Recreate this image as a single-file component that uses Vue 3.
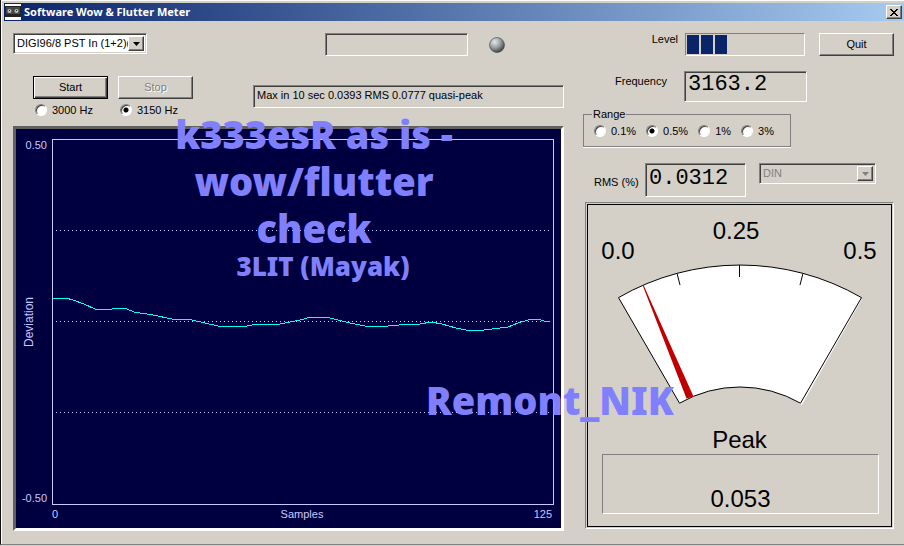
<script setup>
import { ref } from 'vue'

const device = ref('a')
const weighting = ref('din')
const tone = ref('3150')
const range = ref('0.5')
const tones = ['3000', '3150']
const ranges = ['0.1', '0.5', '1', '3']

const trace = [
  [1, 159], [14, 159], [21, 161], [32, 165], [43, 170], [60, 170], [65, 169], [75, 170],
  [82, 173], [101, 176], [120, 180], [140, 181], [153, 184], [166, 187], [195, 187],
  [206, 185], [228, 185], [248, 181], [259, 178], [274, 178], [286, 181], [298, 184],
  [313, 187], [336, 187], [358, 185], [368, 185], [379, 183], [390, 185], [397, 187],
  [404, 189], [414, 191], [432, 191], [448, 189], [456, 188], [466, 184], [476, 181],
  [486, 180], [492, 182], [498, 182],
].map((p) => p.join(',')).join(' ')
</script>

<template>
  <main class="window">
    <header class="titlebar">
      <svg class="app-icon" viewBox="0 0 16 16" aria-hidden="true">
        <rect width="16" height="16" fill="#fff" />
        <rect y="2" width="16" height="11" fill="#222" />
        <rect x="1" y="3" width="14" height="7" fill="#484848" />
        <circle cx="4.500" cy="7" r="2" fill="#bbb" />
        <circle cx="11.500" cy="7" r="2" fill="#bbb" />
        <rect x="4" y="6" width="1" height="1" fill="#222" />
        <rect x="11" y="6" width="1" height="1" fill="#222" />
      </svg>
      <h1>Software Wow &amp; Flutter Meter</h1>
      <button class="close" aria-label="Close">
        <svg viewBox="0 0 8 7" shape-rendering="crispEdges" aria-hidden="true">
          <path d="M0 0h2v1h1v1h2v-1h1v-1h2v1h-1v1h-1v1h-1v1h1v1h1v1h1v1h-2v-1h-1v-1h-2v1h-1v1h-2v-1h1v-1h1v-1h1v-1h-1v-1h-1v-1h-1z" />
        </svg>
      </button>
    </header>

    <div class="content">
      <section class="left">
        <div class="source-row">
          <div class="combo device">
            <select v-model="device" aria-label="Input device">
              <option value="a">DIGI96/8 PST In (1+2)(1)</option>
            </select>
            <span class="arrow"><svg viewBox="0 0 7 4"><path d="M0 0h7L3.500 4z" /></svg></span>
          </div>
          <input class="sunken status" aria-label="Status" readonly />
          <svg class="led" viewBox="0 0 16 16" aria-hidden="true">
            <defs>
              <radialGradient id="led" cx="0.35" cy="0.3" r="0.75">
                <stop offset="0" stop-color="#e4eaec" />
                <stop offset="0.5" stop-color="#9aa1a2" />
                <stop offset="1" stop-color="#383c38" />
              </radialGradient>
            </defs>
            <circle cx="8" cy="8" r="7.500" fill="url(#led)" stroke="#444844" stroke-width="0.600" />
          </svg>
        </div>

        <div class="run-row">
          <div class="run-controls">
            <button class="btn default">Start</button>
            <button class="btn" disabled>Stop</button>
            <label v-for="t in tones" :key="t" class="radio">
              <input v-model="tone" type="radio" name="tone" :value="t" />{{ t }} Hz
            </label>
          </div>
          <output class="sunken result">Max in 10 sec 0.0393 RMS 0.0777 quasi-peak</output>
        </div>

        <div class="chart">
          <div class="y-axis">
            <span>0.50</span>
            <span class="y-title">Deviation</span>
            <span>-0.50</span>
          </div>
          <svg class="plot" viewBox="0 0 502 366" preserveAspectRatio="none" shape-rendering="crispEdges">
            <rect x="0.500" y="0.500" width="501" height="365" class="frame" />
            <path d="M4 91.500H498M4 182.500H498M4 273.500H498" class="grid" />
            <polyline :points="trace" class="trace" />
          </svg>
          <div class="x-axis">
            <span>0</span><span>Samples</span><span>125</span>
          </div>
          <div class="caption">
            k333esR as is -<br />wow/flutter<br />check
            <small>3LIT (Mayak)</small>
          </div>
          <div class="signature">Remont_NIK</div>
        </div>
      </section>

      <section class="right">
        <div class="level-row">
          <span id="level-label" class="level-label">Level</span>
          <div class="progress" role="progressbar" aria-labelledby="level-label">
            <i v-for="n in 3" :key="n"></i>
          </div>
          <button class="btn">Quit</button>
        </div>
        <div class="freq-row">
          <label for="freq">Frequency</label>
          <input id="freq" class="sunken digits" value="3163.2" readonly />
        </div>
        <fieldset class="range">
          <legend>Range</legend>
          <label v-for="r in ranges" :key="r" class="radio">
            <input v-model="range" type="radio" name="range" :value="r" />{{ r }}%
          </label>
        </fieldset>
        <div class="rms-row">
          <label for="rms">RMS (%)</label>
          <input id="rms" class="sunken digits" value="0.0312" readonly />
          <div class="combo weighting">
            <select v-model="weighting" aria-label="Weighting" disabled>
              <option value="din">DIN</option>
            </select>
            <span class="arrow"><svg viewBox="0 0 7 4"><path d="M0 0h7L3.500 4z" /></svg></span>
          </div>
        </div>
        <div class="meter">
          <svg class="dial" viewBox="-2 -2 307 223">
            <text x="30" y="54" text-anchor="middle">0.0</text>
            <text x="148" y="34" text-anchor="middle">0.25</text>
            <text x="272" y="54" text-anchor="middle">0.5</text>
            <path class="dial-light" d="M272.500 93.600L212.500 199.200" />
            <path class="dial-face" d="M30.500 92.600A243 243 0 0 1 273.500 92.600L212.500 198.200A121 121 0 0 0 91.500 198.200Z" />
            <path class="tick" d="M151.500 60V72M89 68.300L92 80M215 68.300L212 80" />
            <path class="needle" d="M54.500 80L98.500 193.500L105.500 191.500L55.500 80Z" />
          </svg>
          <h2>Peak</h2>
          <output class="peak">0.053</output>
        </div>
      </section>
    </div>
  </main>
</template>

<style>
body {
  background: #d4d0c8;
}
</style>

<style scoped>
* {
  box-sizing: border-box;
}
.window {
  font: 11px/13px "Liberation Sans", Arial, sans-serif;
  color: #000;
  background: #d4d0c8;
  border-left: 1px solid #111;
  border-bottom: 1px solid #808080;
  box-shadow: inset 1px 0 #fff, inset 0 1px #fff;
  padding: 3px 0 13px 3px;
}
.titlebar {
  display: flex;
  align-items: center;
  height: 18px;
  padding: 0 2px 0 1px;
  background: linear-gradient(90deg, #0a246a, #a6caf0);
  color: #fff;
}
.app-icon {
  width: 16px;
  height: 16px;
}
h1 {
  flex: 1;
  margin: 0 0 0 3px;
  font: bold 11px/16px "Noto Sans", "Open Sans", sans-serif;
}
button {
  padding: 0;
  font: inherit;
  color: #000;
  background: #d4d0c8;
  border: 1px solid;
  border-color: #fff #404040 #404040 #fff;
  box-shadow: inset -1px -1px #808080;
}
.close {
  display: flex;
  align-items: center;
  justify-content: center;
  width: 16px;
  height: 14px;
}
.close svg {
  width: 8px;
  height: 7px;
}
.content {
  display: flex;
  gap: 19px;
  padding: 12px 10px 0 9px;
}
.left {
  flex: 1;
  min-width: 0;
}
.right {
  width: 311px;
}
.btn {
  width: 75px;
  height: 23px;
}
.btn.default {
  border-color: #000;
  box-shadow: inset 1px 1px #fff, inset -1px -1px #404040, inset -2px -2px #808080;
}
.btn:disabled {
  color: #808080;
  text-shadow: 1px 1px #fff;
}
.sunken {
  display: block;
  min-width: 0;
  background: transparent;
  border: 1px solid;
  border-color: #808080 #fff #fff #808080;
  box-shadow: inset 1px 1px #404040;
  border-radius: 0;
  outline: 0;
}
.combo {
  display: flex;
  height: 21px;
  background: #fff;
  border: 1px solid;
  border-color: #808080 #fff #fff #808080;
  box-shadow: inset 1px 1px #404040, inset -1px -1px #d4d0c8;
  padding: 2px;
}
.combo select {
  flex: 1;
  min-width: 0;
  appearance: none;
  border: 0;
  padding: 0 0 0 1px;
  background: transparent;
  color: #000;
  font: inherit;
  text-overflow: clip;
}
.arrow {
  display: flex;
  align-items: center;
  justify-content: center;
  width: 16px;
  background: #d4d0c8;
  border: 1px solid;
  border-color: #fff #404040 #404040 #fff;
  box-shadow: inset -1px -1px #808080;
  pointer-events: none;
}
.arrow svg {
  width: 7px;
  height: 4px;
}
.device {
  width: 134px;
}
.weighting {
  width: 117px;
  background: transparent;
}
.weighting select {
  color: #808080;
  opacity: 1;
}
.weighting path {
  fill: #808080;
}
.source-row {
  display: flex;
  align-items: flex-start;
}
.status {
  width: 143px;
  height: 23px;
  margin-left: 178px;
}
.led {
  width: 16px;
  height: 16px;
  margin: 4px 0 0 21px;
}
.run-row {
  display: flex;
  align-items: flex-start;
  gap: 60px;
  margin-top: 20px;
  padding-left: 20px;
}
.run-controls {
  display: grid;
  grid-template-columns: 75px 75px;
  gap: 4px 10px;
}
.radio {
  display: flex;
  align-items: center;
  gap: 5px;
  height: 14px;
  padding-left: 2px;
  white-space: nowrap;
}
.radio input {
  appearance: none;
  flex: none;
  width: 12px;
  height: 12px;
  margin: 0;
  border: 1px solid;
  border-color: #808080 #fff #fff #808080;
  border-radius: 50%;
  background: #fff;
  box-shadow: inset 1px 1px #404040;
}
.radio input:checked {
  background: radial-gradient(circle, #000 2px, #fff 3px);
}
.result {
  flex: 1;
  height: 23px;
  margin-top: 9px;
  padding: 3px;
}
.chart {
  position: relative;
  display: grid;
  grid-template: 366px auto / 36px 1fr;
  margin-top: 9px;
  padding: 10px 7px 7px 0;
  color: #c8c8ff;
  background: #000040;
  border: 3px solid;
  border-color: #606060 #fff #fff #606060;
}
.y-axis {
  display: flex;
  flex-direction: column;
  align-items: flex-end;
  justify-content: space-between;
  padding-right: 5px;
}
.y-title {
  align-self: flex-start;
  margin-left: 7px;
  writing-mode: vertical-rl;
  transform: rotate(180deg);
  font-size: 12px;
}
.plot {
  display: block;
  width: 100%;
  height: 366px;
}
.frame {
  fill: none;
  stroke: #c8c8ff;
}
.grid {
  stroke: #c8c8ff;
  stroke-dasharray: 1 3;
}
.trace {
  fill: none;
  stroke: #00ffff;
}
.x-axis {
  grid-column: 2;
  display: grid;
  grid-template-columns: 1fr auto 1fr;
  padding: 3px 2px 0 0;
}
.x-axis :last-child {
  text-align: right;
}
.caption,
.signature {
  position: absolute;
  color: #8080ff;
  font: 900 38px/47px "Noto Sans", "Open Sans", sans-serif;
  white-space: nowrap;
}
.caption {
  top: -18px;
  left: 148px;
  width: 300px;
  text-align: center;
}
.caption small {
  display: block;
  padding-left: 18px;
  font-size: 26px;
  line-height: 28px;
}
.signature {
  top: 248px;
  left: 410px;
}
.level-row {
  display: flex;
  align-items: flex-start;
  justify-content: flex-end;
}
.level-label {
  margin-right: 7px;
}
.progress {
  display: flex;
  gap: 2px;
  width: 120px;
  height: 23px;
  margin-right: 14px;
  padding: 1px;
  border: 1px solid;
  border-color: #808080 #fff #fff #808080;
}
.progress i {
  width: 12px;
  background: #0a246a;
}
.freq-row {
  display: flex;
  gap: 17px;
  margin-top: 15px;
  padding-left: 32px;
}
.freq-row label {
  padding-top: 4px;
}
.digits {
  padding: 0 3px 4px;
  font: 22px/24px "Liberation Mono", "Courier New", monospace;
}
.freq-row .digits {
  width: 123px;
  height: 31px;
}
.range {
  display: flex;
  gap: 8px;
  width: 208px;
  height: 39px;
  margin: 6px 0 0;
  padding: 3px 8px;
  border: 1px solid #808080;
  box-shadow: 0 1px #fff;
}
.range legend {
  padding: 0 1px;
}
.rms-row {
  display: flex;
  align-items: flex-start;
  margin-top: 16px;
  padding-left: 11px;
}
.rms-row label {
  width: 51px;
  padding-top: 13px;
}
.rms-row .digits {
  width: 101px;
  height: 34px;
  margin-right: 13px;
}
.meter {
  margin: 5px 0 0 2px;
  padding-bottom: 14px;
  border: 1px solid;
  border-color: #808080 #fff #fff #808080;
  outline: 1px solid #000;
  outline-offset: -3px;
}
.dial {
  display: block;
  width: 100%;
}
.dial text {
  font-size: 24px;
}
.dial-face {
  fill: #fff;
  stroke: #000;
}
.dial-light {
  stroke: #fff;
  stroke-width: 3;
}
.tick {
  stroke: #000;
}
.needle {
  fill: #c00000;
}
h2 {
  margin: 0;
  font: 24px/28px "Liberation Sans", Arial, sans-serif;
  text-align: center;
}
.peak {
  display: flex;
  align-items: flex-end;
  justify-content: center;
  height: 60px;
  margin: 0 14px 0 16px;
  border: 1px solid;
  border-color: #808080 #fff #fff #808080;
  font-size: 24px;
  line-height: 28px;
}
</style>
